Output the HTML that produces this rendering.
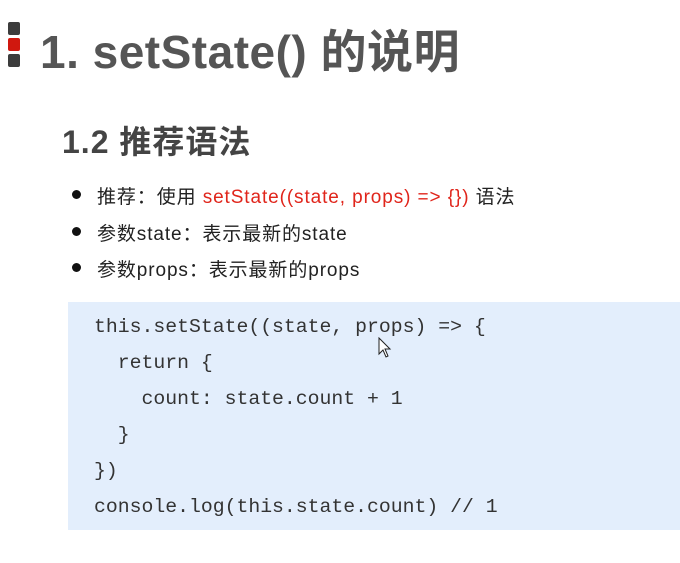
<!DOCTYPE html>
<html><head><meta charset="utf-8"><style>
body{margin:0;width:680px;height:563px;background:#fff;overflow:hidden;position:relative;font-family:"Liberation Sans","Noto Sans CJK SC",sans-serif;}
.blk{position:absolute;left:8px;width:12px;height:13px;border-radius:2px;background:#3c3c3c}
.t1{position:absolute;left:40px;top:16px;font-size:46px;font-weight:bold;color:#555;white-space:nowrap;letter-spacing:0.5px}
.t2{position:absolute;left:62px;top:117px;font-size:32px;font-weight:bold;color:#444;white-space:nowrap;letter-spacing:1px}
.li{position:absolute;left:97px;font-size:19px;color:#222;white-space:nowrap;letter-spacing:0.9px}
.dot{position:absolute;left:72px;width:9px;height:9px;border-radius:50%;background:#111}
.red{color:#e0251b}
.code{position:absolute;left:68px;top:302px;width:612px;height:228px;background:#e3eefc}
.code pre{margin:0;position:absolute;left:26px;top:7px;font-family:"Liberation Mono",monospace;font-size:19.8px;line-height:36px;color:#333}
</style></head><body>
<div class="blk" style="top:22px"></div>
<div class="blk" style="top:38px;background:#d0180f"></div>
<div class="blk" style="top:54px"></div>
<div class="t1">1. setState() 的说明</div>
<div class="t2">1.2 推荐语法</div>
<div class="dot" style="top:190px"></div><div class="li" style="top:182px">推荐：使用 <span class="red">setState((state, props) =&gt; {})</span> 语法</div>
<div class="dot" style="top:227px"></div><div class="li" style="top:219px">参数state：表示最新的state</div>
<div class="dot" style="top:263px"></div><div class="li" style="top:255px">参数props：表示最新的props</div>
<div class="code"><pre>this.setState((state, props) =&gt; {
  return {
    count: state.count + 1
  }
})
console.log(this.state.count) // 1</pre></div>
<svg style="position:absolute;left:378px;top:337px" width="14" height="22" viewBox="0 0 14 22"><path d="M1 1 L1 17 L5 13 L8 20 L10 19 L7 12 L12 12 Z" fill="#fff" stroke="#222" stroke-width="1"/></svg>
</body></html>
